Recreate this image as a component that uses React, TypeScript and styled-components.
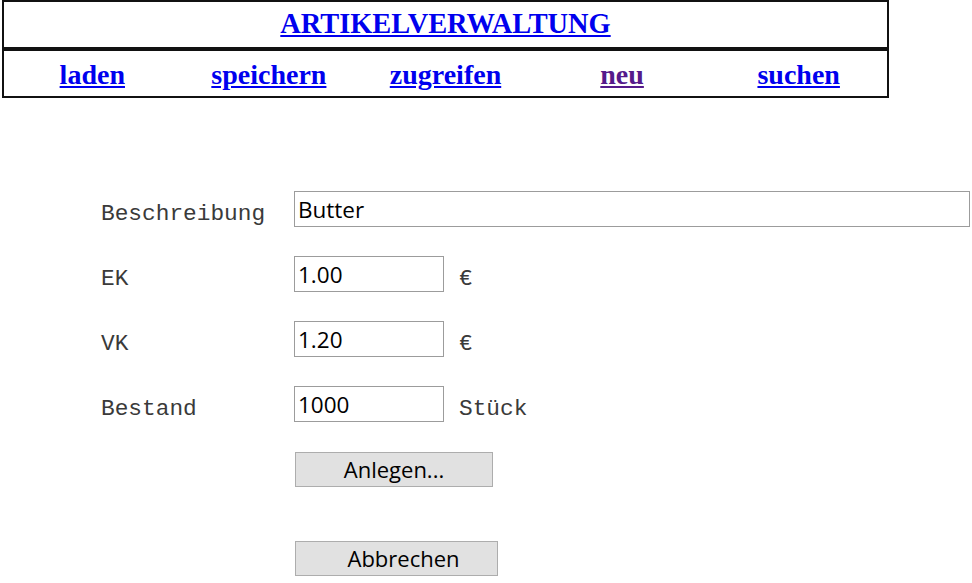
import React from "react";
import styled, { createGlobalStyle } from "styled-components";

const GlobalStyle = createGlobalStyle`
  body {
    margin: 0;
    background: #ffffff;
    font-family: "Liberation Serif", serif;
  }
`;

const Page = styled.div`
  width: 972px;
  height: 583px;
  overflow: hidden;
`;

const Header = styled.div`
  margin-left: 2px;
  width: 887px;
`;

const TitleBox = styled.div`
  box-sizing: border-box;
  height: 49px;
  border: 2px solid #111;
  padding-top: 7px;
  text-align: center;
  font-size: 28.4px;
  font-weight: bold;
  line-height: 30px;
`;

const NavBox = styled.div`
  box-sizing: border-box;
  height: 49px;
  border: 2px solid #111;
  padding-top: 8px;
  display: grid;
  grid-template-columns: repeat(5, 1fr);
  font-size: 28px;
  font-weight: bold;
  line-height: 31px;
  text-align: center;
`;

const Link = styled.a<{ visited?: boolean }>`
  color: ${(p) => (p.visited ? "#551a8b" : "#0000ee")};
  text-decoration: underline;
  cursor: pointer;
`;

const Form = styled.div`
  margin-top: 93px;
  margin-left: 101px;
  display: flex;
  flex-direction: column;
`;

const Row = styled.div<{ gap: number }>`
  display: flex;
  align-items: baseline;
  margin-top: ${(p) => p.gap}px;
`;

const Label = styled.span`
  width: 193px;
  flex-shrink: 0;
  font-family: "Liberation Mono", "Courier New", monospace;
  font-size: 22.8px;
  color: #3a3a3a;
  position: relative;
  top: 2px;
`;

const Input = styled.input<{ wide?: boolean }>`
  box-sizing: border-box;
  width: ${(p) => (p.wide ? "676px" : "150px")};
  height: 36px;
  margin: 0;
  padding: 0 3px;
  border: 1px solid #9c9c9c;
  font-family: "Open Sans", "Noto Sans", sans-serif;
  font-size: 22.5px;
  color: #000;
  background: #fff;
  outline: none;
`;

const Unit = styled.span`
  margin-left: 15px;
  font-family: "Liberation Mono", "Courier New", monospace;
  font-size: 22.8px;
  color: #3a3a3a;
  position: relative;
  top: 2px;
`;

const Button = styled.button<{ w: number; shift?: number }>`
  box-sizing: border-box;
  width: ${(p) => p.w}px;
  height: 35px;
  margin: 0 0 0 194px;
  padding: 0 0 0 ${(p) => p.shift ?? 0}px;
  background: #e1e1e1;
  border: 1px solid #adadad;
  border-radius: 0;
  font-family: "Open Sans", "Noto Sans", sans-serif;
  font-size: 22px;
  line-height: 33px;
  color: #000;
  text-align: center;
`;

const ButtonRow = styled.div<{ gap: number }>`
  display: flex;
  margin-top: ${(p) => p.gap}px;
`;

const App = () => {
  return (
    <Page>
      <GlobalStyle />
      <Header>
        <TitleBox>
          <Link>ARTIKELVERWALTUNG</Link>
        </TitleBox>
        <NavBox>
          <div>
            <Link>laden</Link>
          </div>
          <div>
            <Link>speichern</Link>
          </div>
          <div>
            <Link>zugreifen</Link>
          </div>
          <div>
            <Link visited>neu</Link>
          </div>
          <div>
            <Link>suchen</Link>
          </div>
        </NavBox>
      </Header>
      <Form>
        <Row gap={0}>
          <Label>Beschreibung</Label>
          <Input wide defaultValue="Butter" />
        </Row>
        <Row gap={29}>
          <Label>EK</Label>
          <Input defaultValue="1.00" />
          <Unit>€</Unit>
        </Row>
        <Row gap={29}>
          <Label>VK</Label>
          <Input defaultValue="1.20" />
          <Unit>€</Unit>
        </Row>
        <Row gap={29}>
          <Label>Bestand</Label>
          <Input defaultValue="1000" />
          <Unit>Stück</Unit>
        </Row>
        <ButtonRow gap={30}>
          <Button w={198}>Anlegen...</Button>
        </ButtonRow>
        <ButtonRow gap={54}>
          <Button w={203} shift={14}>
            Abbrechen
          </Button>
        </ButtonRow>
      </Form>
    </Page>
  );
};

export default App;
